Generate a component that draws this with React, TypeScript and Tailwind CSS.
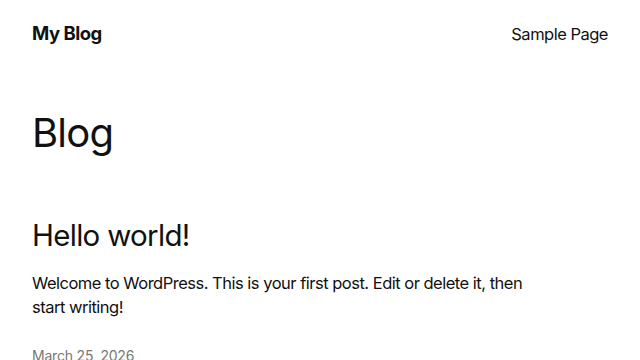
export default function App() {
  return (
    <div className="min-h-screen bg-white text-[#111111] font-['Inter',sans-serif]">
      <header className="flex h-[67px] items-center justify-between px-8">
        <a className="text-[18.5px] font-bold tracking-[-0.5px]">My Blog</a>
        <nav>
          <a className="mt-[2px] block text-[16.5px] tracking-[-0.5px]">Sample Page</a>
        </nav>
      </header>

      <main className="px-8">
        <h1 className="mt-[43px] text-[40px] leading-[46px] tracking-[-0.8px]">Blog</h1>

        <article className="mt-[61px]">
          <h2 className="text-[29.5px] leading-[36px] tracking-[-0.7px]">Hello world!</h2>
          <p className="mt-[18px] max-w-[520px] text-[16.5px] leading-[24px] tracking-[-0.5px]">
            Welcome to WordPress. This is your first post. Edit or delete it, then start writing!
          </p>
          <div className="mt-[27px] text-[14px] leading-[20px] tracking-[-0.2px] text-[#777777]">March 25, 2026</div>
        </article>
      </main>
    </div>
  );
}
